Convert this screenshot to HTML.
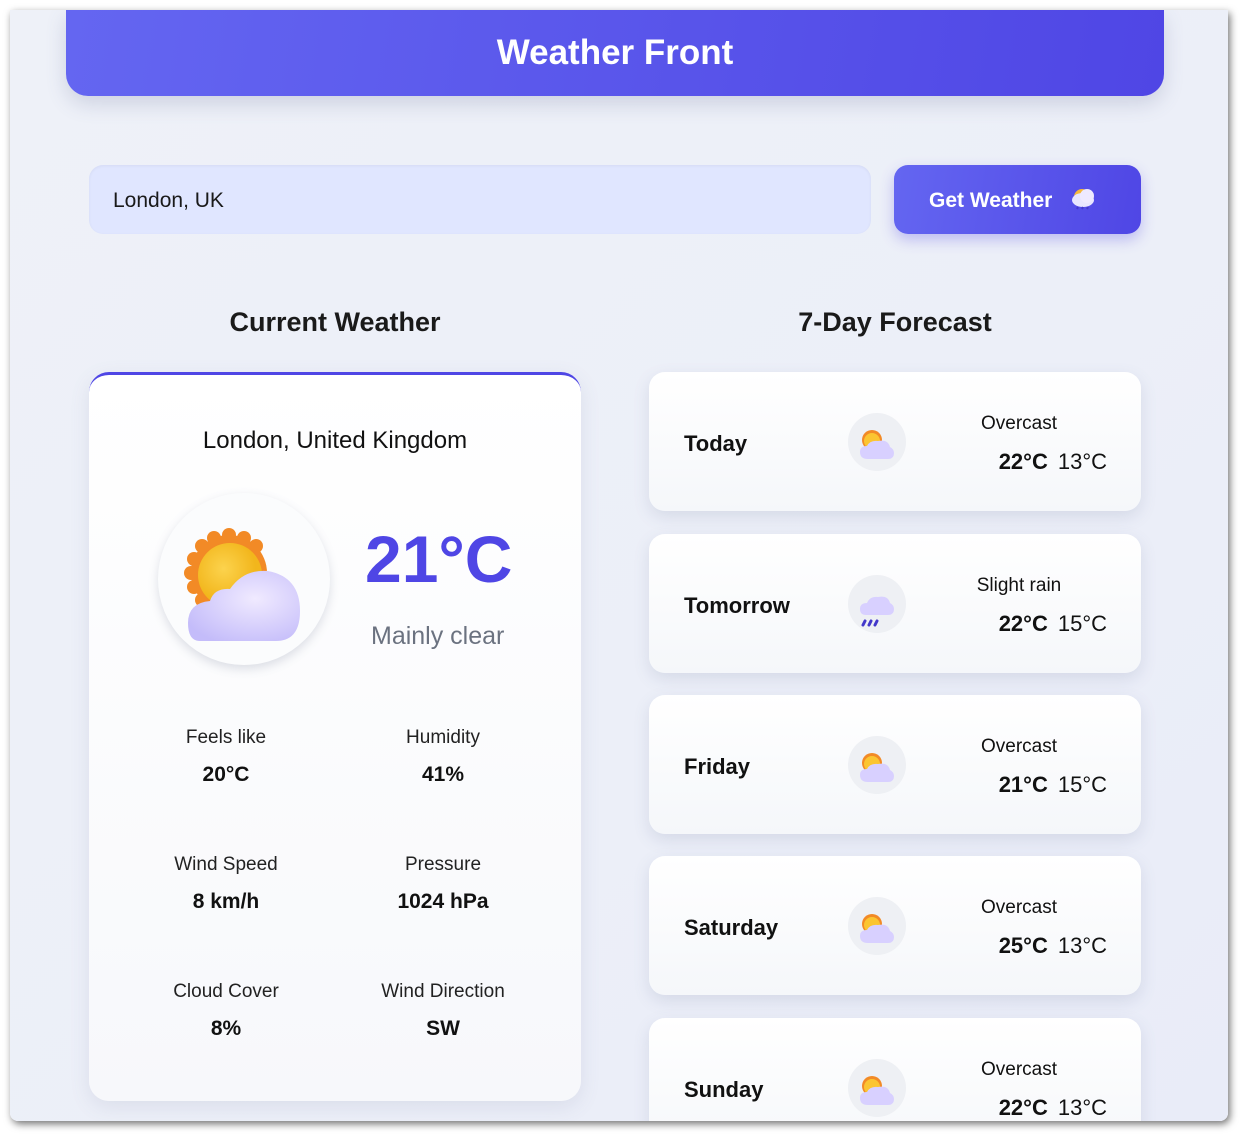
<!DOCTYPE html>
<html><head><meta charset="utf-8"><style>
*{box-sizing:border-box;margin:0;padding:0}
html,body{width:1248px;height:1141px;overflow:hidden;background:#fff;font-family:"Liberation Sans","DejaVu Sans",sans-serif;color:#111}
.win{position:absolute;left:10px;top:10px;width:1218px;height:1111px;background:linear-gradient(135deg,#eef1f8,#eceff8 60%,#e9ecf8);border-radius:0 0 8px 8px;box-shadow:2px 3px 8px rgba(0,0,0,.55);overflow:hidden}
.hdr{position:absolute;left:56px;top:0;width:1098px;height:86px;border-radius:0 0 22px 22px;background:linear-gradient(100deg,#6466f1,#4f46e5);box-shadow:0 8px 20px rgba(80,90,140,.2);color:#fff;font-size:35px;font-weight:bold;text-align:center;line-height:86px}
.inp{position:absolute;left:79px;top:155px;width:782px;height:69px;background:#e0e6ff;border-radius:14px;font-size:21px;line-height:72px;padding-left:24px;color:#1a1a1a;box-shadow:inset 0 1px 3px rgba(0,0,0,.05)}
.btn{position:absolute;left:884px;top:155px;width:247px;height:69px;background:linear-gradient(100deg,#6466f1,#4f46e5);border-radius:14px;color:#fff;font-size:21px;font-weight:bold;line-height:72px;padding-left:35px;box-shadow:0 6px 14px rgba(79,70,229,.3)}
.h2{position:absolute;top:297px;width:492px;text-align:center;font-size:27px;font-weight:bold;color:#1a1a1a}
.card{position:absolute;left:79px;top:362px;width:492px;height:729px;background:linear-gradient(180deg,#fff,#f7f8fb);border-radius:20px;border-top:3px solid #4f46e5;box-shadow:0 6px 20px rgba(90,100,140,.12)}
.loc{position:absolute;top:52px;width:100%;text-align:center;font-size:24px}
.circ{position:absolute;left:69px;top:118px;width:172px;height:172px;border-radius:50%;background:#fbfcfd;box-shadow:0 4px 10px rgba(90,100,130,.2)}
.temp{position:absolute;left:276px;top:146px;font-size:66px;font-weight:bold;color:#4f46e5}
.desc{position:absolute;left:282px;top:247px;font-size:25px;color:#6b7280}
.st{position:absolute;width:200px;text-align:center}
.st .l{font-size:19px;color:#222}.st .v{font-size:21px;font-weight:bold;margin-top:14px}
.fc{position:absolute;left:639px;width:492px;height:139px;background:linear-gradient(180deg,#fff,#f5f7fa);border-radius:16px;box-shadow:0 6px 16px rgba(90,100,140,.15)}
.fc .d{position:absolute;left:35px;top:59px;font-size:22px;font-weight:bold}
.fc .ic{position:absolute;left:199px;top:41px;width:58px;height:58px;border-radius:50%;background:#eef0f4}
.fc .c{position:absolute;left:300px;width:140px;text-align:center;top:41px;font-size:19px}
.fc .t{position:absolute;right:34px;top:77px;font-size:22px}
.fc .t b{margin-right:10px}
</style></head><body>
<div class="win">
<div class="hdr">Weather Front</div>
<div class="inp">London, UK</div>
<div class="btn">Get Weather <svg width="30" height="26" viewBox="0 0 30 26" style="vertical-align:-4px;margin-left:10px"><circle cx="14" cy="12" r="8" fill="#f6b93b"/><ellipse cx="15" cy="15" rx="11" ry="7" fill="#e8e6ff"/><circle cx="19" cy="11" r="7" fill="#eeeaff"/><path d="M10 22l-1 2M15 22l-1 2M20 22l-1 2" stroke="#4338ca" stroke-width="2"/></svg></div>
<div class="h2" style="left:79px">Current Weather</div>
<div class="h2" style="left:639px">7-Day Forecast</div>
<div class="card">
<div class="loc">London, United Kingdom</div>
<div class="circ"><svg width="172" height="172" viewBox="0 0 172 172">
<defs><radialGradient id="sun" cx=".4" cy=".4"><stop offset="0" stop-color="#fcd34d"/><stop offset="1" stop-color="#f2b61c"/></radialGradient>
<radialGradient id="cl" cx=".6" cy=".4" r=".7"><stop offset="0" stop-color="#f0eaff"/><stop offset="1" stop-color="#c4bcfa"/></radialGradient></defs>
<g fill="#f28a26"><circle cx="71" cy="80" r="38"/><circle cx="71" cy="42" r="7"/><circle cx="98" cy="53" r="7"/><circle cx="44" cy="53" r="7"/><circle cx="33" cy="80" r="7"/><circle cx="44" cy="107" r="7"/><circle cx="56" cy="45" r="7"/><circle cx="86" cy="45" r="7"/><circle cx="36" cy="66" r="7"/><circle cx="36" cy="94" r="7"/></g>
<circle cx="72" cy="82" r="32" fill="url(#sun)"/>
<path d="M42 148 Q30 148 30 130 Q30 110 52 108 Q56 95 72 96 Q86 76 110 78 Q142 84 142 118 Q142 148 118 148 Z" fill="url(#cl)"/>
</svg></div>
<div class="temp">21°C</div>
<div class="desc">Mainly clear</div>
<div class="st" style="left:37px;top:352px"><div class="l">Feels like</div><div class="v">20°C</div></div>
<div class="st" style="left:254px;top:352px"><div class="l">Humidity</div><div class="v">41%</div></div>
<div class="st" style="left:37px;top:479px"><div class="l">Wind Speed</div><div class="v">8 km/h</div></div>
<div class="st" style="left:254px;top:479px"><div class="l">Pressure</div><div class="v">1024 hPa</div></div>
<div class="st" style="left:37px;top:606px"><div class="l">Cloud Cover</div><div class="v">8%</div></div>
<div class="st" style="left:254px;top:606px"><div class="l">Wind Direction</div><div class="v">SW</div></div>
</div>
<svg width="0" height="0" style="position:absolute"><defs>
<symbol id="pc" viewBox="0 0 58 58"><circle cx="24" cy="27" r="10" fill="#f28a26"/><circle cx="24" cy="28" r="8" fill="#fbc531"/><path d="M20 46 Q12 46 12 39 Q12 33 19 33 Q22 27 30 28 Q40 26 42 34 Q46 36 46 40 Q46 46 40 46Z" fill="#d8d0ff"/></symbol>
<symbol id="rn" viewBox="0 0 58 58"><path d="M18 40 Q12 40 12 34 Q12 28 19 28 Q22 21 30 22 Q40 20 42 28 Q46 30 46 34 Q46 40 40 40Z" fill="#d8d0ff"/><path d="M17 46 l-2 4 M23 46 l-2 4 M29 46 l-2 4" stroke="#4338ca" stroke-width="3" stroke-linecap="round"/></symbol>
</defs></svg>
<div class="fc" style="top:362px"><div class="d">Today</div><div class="ic"><svg width="58" height="58"><use href="#pc"/></svg></div><div class="c">Overcast</div><div class="t"><b>22°C</b>13°C</div></div>
<div class="fc" style="top:524px"><div class="d">Tomorrow</div><div class="ic"><svg width="58" height="58"><use href="#rn"/></svg></div><div class="c">Slight rain</div><div class="t"><b>22°C</b>15°C</div></div>
<div class="fc" style="top:685px"><div class="d">Friday</div><div class="ic"><svg width="58" height="58"><use href="#pc"/></svg></div><div class="c">Overcast</div><div class="t"><b>21°C</b>15°C</div></div>
<div class="fc" style="top:846px"><div class="d">Saturday</div><div class="ic"><svg width="58" height="58"><use href="#pc"/></svg></div><div class="c">Overcast</div><div class="t"><b>25°C</b>13°C</div></div>
<div class="fc" style="top:1008px"><div class="d">Sunday</div><div class="ic"><svg width="58" height="58"><use href="#pc"/></svg></div><div class="c">Overcast</div><div class="t"><b>22°C</b>13°C</div></div>
</div>
</body></html>
